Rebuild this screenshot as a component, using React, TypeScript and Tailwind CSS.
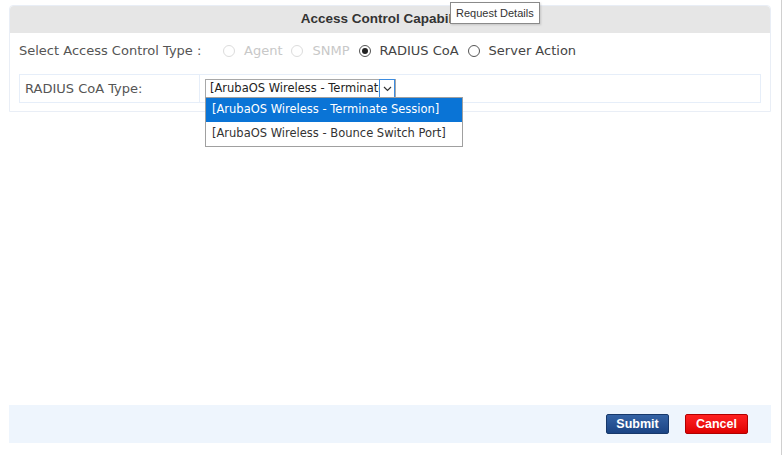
import { useState } from 'react';

const radios = [
    { id: 'agent', label: 'Agent', disabled: true },
    { id: 'snmp', label: 'SNMP', disabled: true },
    { id: 'radius', label: 'RADIUS CoA', disabled: false },
    { id: 'server', label: 'Server Action', disabled: false },
];

const coaTypes = ['[ArubaOS Wireless - Terminate Session]', '[ArubaOS Wireless - Bounce Switch Port]'];

function Radio({ checked, disabled }: { checked: boolean; disabled: boolean }) {
    return (
        <span
            className={`flex h-[12px] w-[12px] items-center justify-center rounded-full border ${
                disabled ? 'border-[#dcdcdc] bg-white' : 'border-[#555] bg-white'
            }`}
        >
            {checked && <span className="h-[6px] w-[6px] rounded-full bg-[#222]" />}
        </span>
    );
}

export default function App() {
    const [selected, setSelected] = useState('radius');
    const [coaType] = useState(coaTypes[0]);

    return (
        <div className="relative flex h-[460px] w-[783px] flex-col bg-white font-['DejaVu_Sans',sans-serif] text-[#444]">
            {/* page scrollbar edge */}
            <div className="absolute right-[1px] top-0 h-[455px] w-px bg-[#d0d0d0]" />

            {/* Panel */}
            <div className="ml-[9px] mt-[5px] w-[762px] rounded-t-[4px] border border-[#e9eef6]">
                <div className="flex h-[27px] items-center justify-center rounded-t-[4px] bg-[#e6e6e6] font-['Liberation_Sans',sans-serif] text-[13.5px] font-bold text-[#333]">
                    Access Control Capabilities
                </div>
                <div className="px-[9px] pb-[8px]">
                    <div className="flex h-[36px] items-center text-[13px]">
                        <span className="w-[204px] text-[#555]">Select Access Control Type :</span>
                        <div className="flex items-center">
                            {radios.map((r) => (
                                <button
                                    key={r.id}
                                    type="button"
                                    disabled={r.disabled}
                                    onClick={() => setSelected(r.id)}
                                    className={`mr-[9px] flex items-center gap-[9px] ${r.disabled ? 'text-[#c8c8c8]' : 'text-[#444]'}`}
                                >
                                    <Radio checked={selected === r.id} disabled={r.disabled} />
                                    <span>{r.label}</span>
                                </button>
                            ))}
                        </div>
                    </div>
                    <div className="mt-[5px] flex h-[29px] items-center border border-[#e6eef9] text-[13px]">
                        <div className="flex h-full w-[180px] items-center border-r border-[#e6eef9] pl-[5px] text-[#555]">
                            RADIUS CoA Type:
                        </div>
                        <div className="relative ml-[5px]">
                            <div className="flex h-[19px] w-[191px] items-center border border-[#a8a8a8] bg-white">
                                <span className="flex-1 overflow-hidden whitespace-nowrap pl-[4px] text-[11.5px] text-[#222]">
                                    {coaType}
                                </span>
                                <span className="flex h-[19px] w-[16px] items-center justify-center border border-[#3c8ce0] bg-white">
                                    <svg width="9" height="6" viewBox="0 0 9 6">
                                        <path d="M1 1 L4.5 4.5 L8 1" fill="none" stroke="#333" strokeWidth="1.2" />
                                    </svg>
                                </span>
                            </div>
                            {/* open list */}
                            <div className="absolute left-0 top-[18px] z-10 w-[258px] border border-[#a0a0a0] bg-white text-[11.5px]">
                                {coaTypes.map((t, i) => (
                                    <div
                                        key={t}
                                        className={`flex h-[24px] items-center whitespace-nowrap pl-[6px] ${
                                            i === 0 ? 'bg-[#0a74d6] text-white' : 'text-[#333]'
                                        }`}
                                    >
                                        {t}
                                    </div>
                                ))}
                            </div>
                        </div>
                    </div>
                </div>
            </div>

            <div className="flex-1" />

            {/* Footer */}
            <div className="mb-[17px] ml-[9px] flex h-[38px] w-[762px] items-center justify-end gap-[16px] bg-[#eef5fd] pr-[23px] font-['Liberation_Sans',sans-serif]">
                <button
                    type="button"
                    className="h-[20px] w-[63px] rounded-[2px] border border-[#17386a] bg-gradient-to-b from-[#3563a5] to-[#1b4484] text-[12.5px] font-bold text-white"
                >
                    Submit
                </button>
                <button
                    type="button"
                    className="h-[20px] w-[63px] rounded-[2px] border border-[#b00000] bg-gradient-to-b from-[#ff2020] to-[#e00000] text-[12.5px] font-bold text-white"
                >
                    Cancel
                </button>
            </div>

            {/* Tooltip */}
            <div className="absolute left-[450px] top-[2px] z-20 flex h-[22px] items-center border border-[#8a8a8a] bg-white px-[5px] font-['Liberation_Sans',sans-serif] text-[11px] text-[#333] shadow-[1px_1px_2px_rgba(0,0,0,0.15)]">
                Request Details
            </div>
        </div>
    );
}
